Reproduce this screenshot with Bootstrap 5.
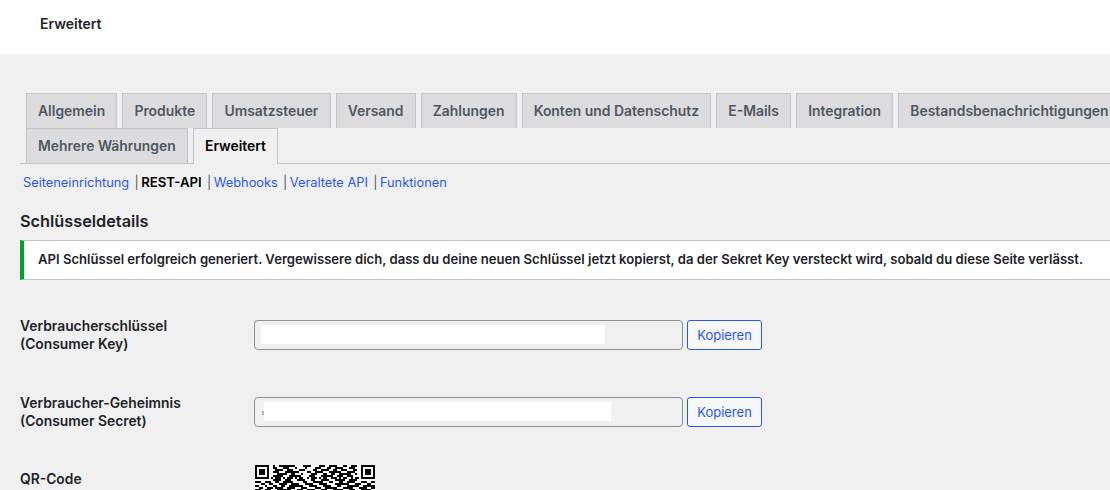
<!DOCTYPE html>
<html lang="de">
<head>
<meta charset="utf-8">
<title>Erweitert</title>
<link href="https://cdn.jsdelivr.net/npm/bootstrap@5.3.0/dist/css/bootstrap.min.css" rel="stylesheet">
<style>
html,body{height:490px;overflow:hidden}
body{background:#f0f0f1;font-family:Inter,"Liberation Sans",sans-serif;color:#1d2327;font-size:13px}
.topbar{height:54px;background:#fff;padding-left:40px;font-size:14px;font-weight:600;color:#1d2327;line-height:48px}
.tabbar{margin:39px 0 0 20px;border-bottom:1px solid #c3c4c7;padding-left:6px;width:1200px;height:71px}
.tabrow{height:35px;gap:5px}
.tabitem{display:block;height:35px;padding:0 11.3px 0 11px;background:#dcdcde;border:1px solid #c3c4c7;border-bottom:0;color:#50575e;font-size:13.9px;font-weight:600;line-height:34px;text-decoration:none;white-space:nowrap}
.tabitem.current{background:#f0f0f1;color:#000;height:36px}
.sublinks{margin:10px 0 0 23px;height:18px;font-size:12.8px;line-height:17px;color:#50575e;white-space:nowrap}
.sublinks a{color:#2c56ea;text-decoration:none}
.sublinks b{color:#000;font-weight:600;font-size:13.2px;line-height:1}
.sepbar{margin:0 2.5px 0 5.3px}
.sectitle{margin:19px 0 0 20px;font-size:16.3px;line-height:20px;font-weight:600;color:#1d2327}
.okbox{margin:9px 0 0 20px;height:40px;background:#fff;border:1px solid #c3c4c7;border-left:4px solid #00a32a;border-right:0;padding-left:14px;font-size:13.1px;font-weight:600;line-height:36px;white-space:nowrap;color:#1d2327}
.keyrow{margin-left:20px}
.gap-one{margin-top:37px}
.gap-two{margin-top:41px}
.gap-three{margin-top:35px}
.keylabel{width:234px;font-size:13.85px;font-weight:600;line-height:18px;color:#1d2327}
.qrlabel{padding-top:5px}
.keyfield{width:429px;height:30px;margin-top:3px;background:#f0f0f1;border:1px solid #8c8f94;border-radius:4px;padding-top:4px}
.mask{display:block;background:#fff;height:19px}
.mask-a{width:344px;margin-left:6px}
.mask-b{width:347px}
.speck{width:2px;height:4px;margin:9px 0 0 7px;background:#b4b5b8}
.copybtn{margin:3px 0 0 4px;width:75px;height:30px;padding:0;background:#f6f7f7;border:1px solid #2c56ea;border-radius:3px;color:#2c56ea;font-size:13px;line-height:28px}
.copybtn:hover{background:#f6f7f7;color:#2c56ea;border-color:#2c56ea}
.qrimg{display:block;margin-left:1px}
</style>
</head>
<body>
<div class="topbar">Erweitert</div>
<nav class="tabbar d-flex flex-column">
  <div class="tabrow d-flex">
    <a class="tabitem" href="#">Allgemein</a><a class="tabitem" href="#">Produkte</a><a class="tabitem" href="#">Umsatzsteuer</a><a class="tabitem" href="#">Versand</a><a class="tabitem" href="#">Zahlungen</a><a class="tabitem" href="#">Konten und Datenschutz</a><a class="tabitem" href="#">E-Mails</a><a class="tabitem" href="#">Integration</a><a class="tabitem" href="#">Bestandsbenachrichtigungen</a>
  </div>
  <div class="tabrow d-flex">
    <a class="tabitem" href="#">Mehrere Währungen</a><a class="tabitem current" href="#">Erweitert</a>
  </div>
</nav>
<div class="sublinks"><a href="#">Seiteneinrichtung</a><span class="sepbar">|</span><b>REST-API</b><span class="sepbar">|</span><a href="#">Webhooks</a><span class="sepbar">|</span><a href="#">Veraltete API</a><span class="sepbar">|</span><a href="#">Funktionen</a></div>
<h2 class="sectitle">Schlüsseldetails</h2>
<div class="okbox">API Schlüssel erfolgreich generiert. Vergewissere dich, dass du deine neuen Schlüssel jetzt kopierst, da der Sekret Key versteckt wird, sobald du diese Seite verlässt.</div>
<div class="keyrow d-flex gap-one">
  <div class="keylabel">Verbraucherschlüssel<br>(Consumer Key)</div>
  <div class="keyfield"><span class="mask mask-a"></span></div>
  <button class="btn copybtn" type="button">Kopieren</button>
</div>
<div class="keyrow d-flex gap-two">
  <div class="keylabel">Verbraucher-Geheimnis<br>(Consumer Secret)</div>
  <div class="keyfield d-flex align-items-start"><span class="speck"></span><span class="mask mask-b"></span></div>
  <button class="btn copybtn" type="button">Kopieren</button>
</div>
<div class="keyrow d-flex gap-three">
  <div class="keylabel qrlabel">QR-Code</div>
  <svg class="qrimg" width="120" height="26" viewBox="0 0 60 13" shape-rendering="crispEdges" aria-label="QR-Code">
    <rect width="60" height="13" fill="#fff"/>
    <path stroke="#000" stroke-width="1" fill="none" d="M0 .5h7M9 .5h1M12 .5h8M24 .5h4M32 .5h3M37 .5h4M44 .5h2M48 .5h3M53 .5h7
    M0 1.5h1M6 1.5h1M9 1.5h2M14 1.5h3M20 1.5h1M25 1.5h1M30 1.5h3M36 1.5h2M40 1.5h4M47 1.5h3M53 1.5h1M59 1.5h1
    M0 2.5h1M2 2.5h3M6 2.5h1M10 2.5h4M16 2.5h3M22 2.5h3M29 2.5h2M33 2.5h4M39 2.5h2M43 2.5h3M49 2.5h2M53 2.5h1M55 2.5h3M59 2.5h1
    M0 3.5h1M2 3.5h3M6 3.5h1M9 3.5h3M15 3.5h7M26 3.5h2M30 3.5h4M37 3.5h6M46 3.5h4M53 3.5h1M55 3.5h3M59 3.5h1
    M0 4.5h1M2 4.5h3M6 4.5h1M11 4.5h5M18 4.5h2M23 4.5h1M28 4.5h3M34 4.5h2M38 4.5h2M42 4.5h6M50 4.5h1M53 4.5h1M55 4.5h3M59 4.5h1
    M0 5.5h1M6 5.5h1M9 5.5h5M17 5.5h6M27 5.5h3M33 5.5h6M41 5.5h3M46 5.5h3M53 5.5h1M59 5.5h1
    M0 6.5h7M8 6.5h1M10 6.5h3M14 6.5h1M16 6.5h3M20 6.5h1M22 6.5h2M26 6.5h1M28 6.5h3M32 6.5h1M34 6.5h2M38 6.5h3M42 6.5h1M44 6.5h2M48 6.5h1M50 6.5h2M53 6.5h7
    M9 7.5h4M15 7.5h3M21 7.5h4M28 7.5h2M33 7.5h4M40 7.5h5M47 7.5h4
    M0 8.5h3M5 8.5h3M10 8.5h2M14 8.5h5M24 8.5h2M29 8.5h5M37 8.5h2M42 8.5h2M46 8.5h4M53 8.5h3M58 8.5h2
    M3 9.5h2M7 9.5h2M12 9.5h4M18 9.5h4M25 9.5h4M32 9.5h4M40 9.5h7M50 9.5h3M56 9.5h2
    M0 10.5h2M5 10.5h1M9 10.5h2M13 10.5h2M17 10.5h7M27 10.5h4M34 10.5h4M41 10.5h2M46 10.5h6M54 10.5h6
    M2 11.5h2M6 11.5h3M10 11.5h4M16 11.5h4M23 11.5h3M30 11.5h3M35 11.5h6M44 11.5h5M52 11.5h4M58 11.5h2
    M0 12.5h3M5 12.5h3M11 12.5h7M21 12.5h3M26 12.5h4M33 12.5h3M39 12.5h5M47 12.5h3M53 12.5h5"/>
  </svg>
</div>
</body>
</html>
